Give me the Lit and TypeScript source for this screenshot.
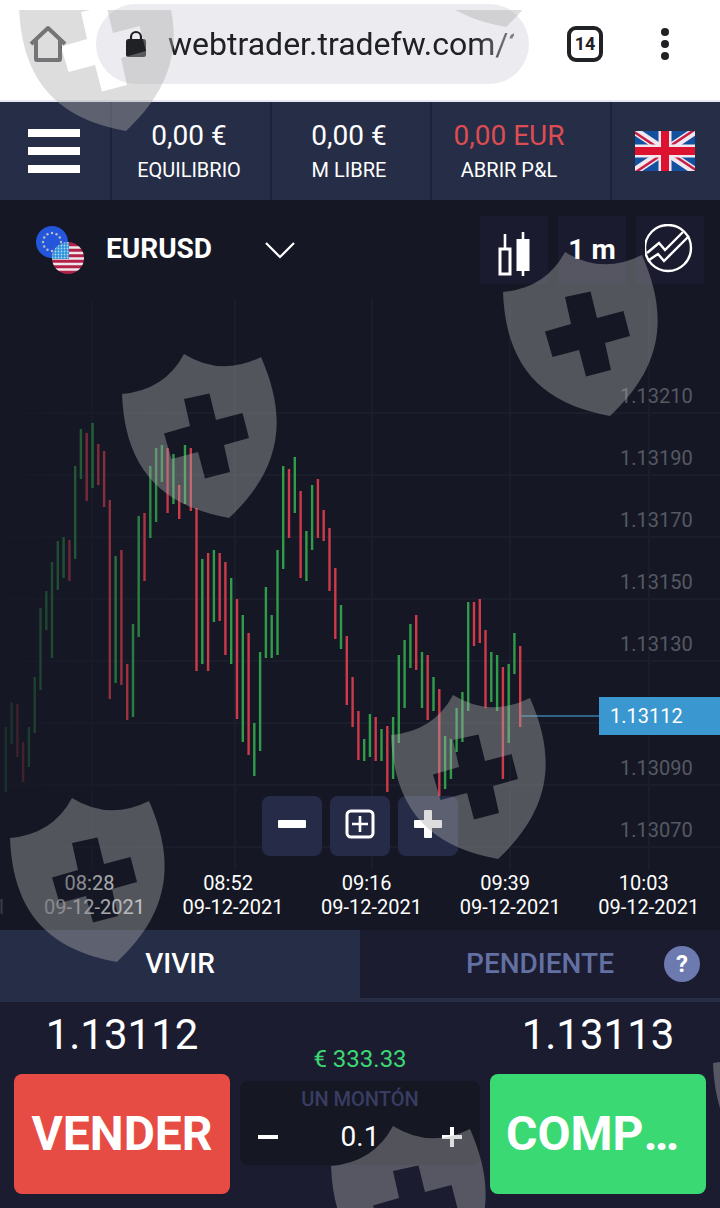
import { LitElement, html, css, svg } from "lit";
import { customElement, property, state } from "lit/decorators.js";

type Candle = [direction: "u" | "d", high: number, low: number];

const CANDLES: Candle[] = [
  ["u", 727, 792], ["u", 702, 744], ["d", 704, 757], ["d", 742, 782], ["u", 727, 767], ["u", 677, 733],
  ["u", 608, 690], ["u", 591, 630], ["u", 562, 658], ["u", 541, 590], ["u", 537, 578], ["d", 540, 581],
  ["u", 466, 559], ["u", 429, 479], ["d", 433, 501], ["u", 423, 488], ["d", 444, 485], ["d", 451, 507],
  ["d", 500, 699], ["u", 556, 683], ["d", 550, 685], ["d", 664, 720], ["u", 624, 717], ["u", 516, 637],
  ["d", 513, 581], ["u", 466, 538], ["u", 448, 522], ["u", 445, 482], ["d", 448, 513], ["u", 454, 504],
  ["d", 485, 519], ["u", 445, 504], ["d", 448, 511], ["d", 508, 671], ["u", 559, 664], ["d", 553, 671],
  ["u", 550, 622], ["d", 553, 621], ["d", 562, 655], ["u", 578, 664], ["d", 599, 719], ["u", 615, 742],
  ["d", 633, 755], ["u", 723, 776], ["u", 652, 751], ["u", 587, 658], ["u", 615, 658], ["u", 550, 655],
  ["u", 466, 569], ["d", 469, 538], ["u", 457, 513], ["d", 491, 578], ["u", 531, 581], ["u", 485, 550],
  ["d", 479, 538], ["d", 510, 541], ["d", 528, 591], ["d", 568, 639], ["u", 605, 649], ["d", 636, 705],
  ["d", 677, 727], ["d", 711, 760], ["u", 739, 761], ["u", 714, 757], ["d", 717, 761], ["u", 729, 761],
  ["d", 726, 792], ["u", 717, 779], ["u", 655, 743], ["u", 640, 708], ["u", 624, 668], ["d", 615, 670],
  ["u", 652, 708], ["d", 655, 720], ["u", 677, 711], ["d", 689, 797], ["u", 736, 789], ["u", 739, 779],
  ["u", 708, 752], ["u", 692, 742], ["u", 602, 711], ["d", 602, 646], ["d", 599, 643], ["d", 630, 708],
  ["u", 652, 702], ["u", 655, 711], ["d", 667, 779], ["u", 664, 743], ["u", 633, 674], ["d", 646, 727],
];

// The empty slot is the level hidden behind the current price tag.
const PRICES = ["1.13210", "1.13190", "1.13170", "1.13150", "1.13130", "", "1.13090", "1.13070"];
const TIMES = ["08:04", "08:28", "08:52", "09:16", "09:39", "10:03"];
const GRID_X = [92, 235, 372, 510, 649];
const GRID_Y = [413, 475, 537, 599, 661, 723, 785, 847];

@customElement("price-chart")
class PriceChart extends LitElement {
  static styles = css`
    :host {
      display: grid;
      position: relative;
      height: 630px;
      overflow: hidden;
      background: #151824;
      color: #fff;
      font-family: Roboto, "Noto Sans", sans-serif;
    }
    :host::after {
      content: "";
      position: absolute;
      inset: 0 auto 0 0;
      width: 180px;
      pointer-events: none;
      background: linear-gradient(90deg, rgba(21, 24, 36, 0.85), rgba(21, 24, 36, 0.5) 45%, rgba(21, 24, 36, 0));
    }
    .plot, .prices, .footer { grid-area: 1 / 1; }
    .plot { width: 100%; height: 630px; display: block; }
    .grid { stroke: #1a1d2a; stroke-width: 2; }
    .u { stroke: #309c4a; stroke-width: 2.4; }
    .d { stroke: #cf3a4a; stroke-width: 2.4; }
    .last { stroke: #2f6487; stroke-width: 2; }
    .prices {
      justify-self: end;
      width: 100px;
      padding-top: 65px;
      font-size: 20px;
      line-height: 62px;
      color: #565863;
    }
    .level { height: 62px; }
    .tag {
      position: absolute;
      right: 0;
      top: 397px;
      width: 110px;
      padding-left: 11px;
      background: #3a97cf;
      font-size: 20px;
      line-height: 38px;
    }
    .footer {
      align-self: end;
      min-width: 0;
      display: grid;
      gap: 15px;
      padding-bottom: 11px;
    }
    .zoom { display: flex; justify-content: center; gap: 8px; }
    .zoom button {
      width: 60px;
      height: 60px;
      padding: 0 0 4px;
      border: 0;
      border-radius: 8px;
      background: #262c48;
      color: #fff;
      display: grid;
      place-items: center;
    }
    .times {
      display: flex;
      justify-content: flex-end;
      overflow: hidden;
      padding-right: 2px;
      font-size: 20px;
      line-height: 24px;
      text-align: center;
    }
    .slot { flex: 0 0 19.3%; display: grid; }
    .hour { padding-right: 10px; }
  `;

  render() {
    return html`
      <svg class="plot" viewBox="0 300 720 630" preserveAspectRatio="none" role="img" aria-label="EURUSD">
        ${GRID_X.map((x) => svg`<line class="grid" x1=${x} x2=${x} y1="300" y2="870"></line>`)}
        ${GRID_Y.map((y) => svg`<line class="grid" x1="0" x2="720" y1=${y} y2=${y}></line>`)}
        ${CANDLES.map(([dir, high, low], i) => {
          const x = (5.8 + i * 5.78).toFixed(1);
          return svg`<line class=${dir} x1=${x} x2=${x} y1=${high} y2=${low}></line>`;
        })}
        <line class="last" x1="521" x2="600" y1="716" y2="716"></line>
      </svg>
      <div class="prices">${PRICES.map((p) => html`<div class="level">${p}</div>`)}</div>
      <div class="tag">1.13112</div>
      <div class="footer">
        <div class="zoom">
          <button aria-label="Alejar">
            <svg width="30" height="30" viewBox="0 0 30 30"><rect x="1" y="11" width="28" height="8" rx="1" fill="currentColor"/></svg>
          </button>
          <button aria-label="Restablecer">
            <svg width="30" height="30" viewBox="0 0 30 30" fill="none" stroke="currentColor" stroke-width="3">
              <rect x="2" y="2" width="26" height="26" rx="4"/><path d="M7 15H23M15 7V23" stroke-width="2.6"/>
            </svg>
          </button>
          <button aria-label="Acercar">
            <svg width="30" height="30" viewBox="0 0 30 30" fill="currentColor"><rect x="1" y="11" width="28" height="8" rx="1"/><rect x="11" y="1" width="8" height="28" rx="1"/></svg>
          </button>
        </div>
        <div class="times">
          ${TIMES.map((t) => html`<div class="slot"><span class="hour">${t}</span><span>09-12-2021</span></div>`)}
        </div>
      </div>
    `;
  }
}

@customElement("account-stat")
class AccountStat extends LitElement {
  @property() value = "";
  @property() label = "";
  @property({ type: Boolean, reflect: true }) loss = false;

  static styles = css`
    :host {
      display: grid;
      align-content: center;
      padding: 2px 4px 0 0;
      text-align: center;
      font-family: Roboto, "Noto Sans", sans-serif;
      color: #fff;
    }
    .value { font-size: 28px; line-height: 36px; }
    .label { font-size: 20px; line-height: 32px; }
    :host([loss]) .value { color: #dc4c52; }
  `;

  render() {
    return html`<div class="value">${this.value}</div><div class="label">${this.label}</div>`;
  }
}

const SHIELDS = [[19, -33], [399, -137], [122, 354], [503, 252], [391, 695], [10, 798], [331, 1126], [713, 1023]];

@customElement("app-root")
class AppRoot extends LitElement {
  @state() private lots = "0.1";

  static styles = css`
    :host {
      display: flex;
      flex-direction: column;
      position: relative;
      min-height: 100vh;
      overflow: hidden;
      background: #1b1c30;
      color: #fff;
      font-family: Roboto, "Noto Sans", sans-serif;
    }
    * { box-sizing: border-box; }
    button { font-family: inherit; color: inherit; margin: 0; }
    .browser {
      display: flex;
      align-items: center;
      height: 102px;
      padding: 0 36px 12px 28px;
      border-bottom: 2px solid #e6e7f0;
      background: #fff;
      color: #202124;
    }
    .bare { border: 0; background: none; padding: 0; display: grid; place-items: center; }
    .address {
      flex: 1;
      min-width: 0;
      display: flex;
      align-items: center;
      gap: 20px;
      height: 80px;
      margin: 0 38px 0 28px;
      padding: 0 15px 0 28px;
      border-radius: 40px;
      background: #ebebf0;
    }
    .address svg { flex: none; }
    .url {
      flex: 1;
      min-width: 0;
      padding: 0;
      border: 0;
      background: none;
      color: #202124;
      font: 32px/40px Roboto, "Noto Sans", sans-serif;
      -webkit-mask-image: linear-gradient(90deg, #000 88%, rgba(0, 0, 0, 0.5));
      mask-image: linear-gradient(90deg, #000 88%, rgba(0, 0, 0, 0.5));
    }
    .tabcount {
      width: 36px;
      height: 36px;
      margin-right: 43px;
      border: 4px solid #202124;
      border-radius: 9px;
      font-size: 18px;
      font-weight: 700;
      line-height: 28px;
    }
    .account {
      display: grid;
      grid-template-columns: 110fr 160fr 160fr 180fr 110fr;
      height: 98px;
      background: #262d46;
    }
    .account > * + * { border-left: 2px solid #1e233a; }
    .account > .bare { padding-right: 2px; }
    .account > .pnl { padding-right: 24px; }
    .toolbar {
      display: flex;
      align-items: center;
      gap: 10px;
      height: 100px;
      padding: 0 16px 0 36px;
      background: #151824;
    }
    .symbol {
      display: flex;
      align-items: center;
      margin-right: auto;
      padding: 0;
      border: 0;
      background: none;
      font-size: 28px;
      font-weight: 700;
      line-height: 48px;
    }
    .name { padding-bottom: 2px; }
    .pair { margin-right: 22px; }
    .chevron { margin-left: 52px; }
    .tool {
      display: grid;
      place-items: center;
      width: 68px;
      height: 68px;
      padding: 0 0 2px;
      border: 0;
      background: #1a1b2e;
      font-size: 28px;
      font-weight: 700;
    }
    .tabs { display: grid; grid-template-columns: 1fr 1fr; position: relative; height: 72px; }
    .tab {
      padding: 0;
      border: 0;
      border-bottom: 4px solid #292c45;
      background: #1b1c30;
      color: #6370a3;
      font-size: 28px;
      font-weight: 500;
      line-height: 32px;
    }
    .tab.active { background: #262d46; border-color: #262d46; color: #fff; }
    .help {
      position: absolute;
      right: 20px;
      top: 16px;
      width: 36px;
      height: 36px;
      padding: 0;
      border: 0;
      border-radius: 50%;
      background: #6d7aaf;
      font-size: 24px;
      font-weight: 700;
    }
    .ticket {
      flex: 1;
      display: grid;
      grid-template-columns: 216fr 240fr 216fr;
      align-items: start;
      gap: 10px;
      padding: 8px 14px 14px;
    }
    .side { display: grid; grid-template-columns: minmax(0, 1fr); gap: 14px; }
    .quote { font-size: 42px; line-height: 50px; text-align: center; }
    .trade {
      height: 120px;
      padding: 0 16px 2px;
      border: 0;
      border-radius: 8px;
      font-size: 48px;
      font-weight: 700;
      overflow: hidden;
      text-overflow: ellipsis;
      white-space: nowrap;
    }
    .sell { background: #e64c44; }
    .buy { background: #3bd974; text-align: left; }
    .sizing { display: grid; gap: 6px; padding-top: 33px; text-align: center; }
    .margin { color: #3bd974; font-size: 24px; line-height: 32px; }
    .lots {
      display: grid;
      grid-template-columns: 56px 1fr 56px;
      align-content: start;
      height: 84px;
      padding-top: 2px;
      border-radius: 8px;
      background: #151722;
    }
    .caption {
      grid-column: 1 / -1;
      color: #393d63;
      font-size: 20px;
      font-weight: 500;
      line-height: 32px;
    }
    .amount {
      min-width: 0;
      padding: 0;
      border: 0;
      background: none;
      color: #fff;
      font: 28px/32px Roboto, "Noto Sans", sans-serif;
      text-align: center;
    }
    .step { height: 44px; }
    .shields {
      position: absolute;
      left: 0;
      top: 10px;
      pointer-events: none;
      fill: rgba(172, 172, 172, 0.41);
    }
  `;

  private step(delta: number) {
    this.lots = Math.max(0.1, Number(this.lots) + delta).toFixed(1);
  }

  private stars() {
    return Array.from({ length: 12 }, (_, i) => {
      const a = (i * Math.PI) / 6;
      return svg`<circle cx=${(16 + 9 * Math.sin(a)).toFixed(1)} cy=${(16 - 9 * Math.cos(a)).toFixed(1)} r="1.2"></circle>`;
    });
  }

  private pairIcon() {
    return html`<svg class="pair" width="48" height="48" viewBox="0 0 48 48">
      <defs>
        <clipPath id="coin"><circle cx="32" cy="32" r="16"/></clipPath>
        <pattern id="dots" width="3" height="3" patternUnits="userSpaceOnUse"><rect width="3" height="3" fill="#2f8edb"/><circle cx="1.5" cy="1.5" r="0.9" fill="#a9dcf7"/></pattern>
      </defs>
      <circle cx="16" cy="16" r="16" fill="#2456dc"/>
      <g fill="#b9bfc4">${this.stars()}</g>
      <g clip-path="url(#coin)">
        <rect x="16" y="16" width="32" height="32" fill="#b22248"/>
        <path d="M16 21.5h32M16 27h32M16 32.5h32M16 38h32M16 43.5h32" stroke="#eee6ea" stroke-width="2.7"/>
        <rect x="16" y="16" width="17" height="17" fill="url(#dots)"/>
      </g>
    </svg>`;
  }

  private flag() {
    return html`<svg width="60" height="40" viewBox="0 0 60 40">
      <clipPath id="uk"><path d="M30 20H60V40zV40H0zH0V0zV0H60z"/></clipPath>
      <rect width="60" height="40" fill="#1450a0"/>
      <path d="M0 0L60 40M60 0L0 40" stroke="#f1e8ef" stroke-width="8"/>
      <path d="M0 0L60 40M60 0L0 40" clip-path="url(#uk)" stroke="#c71f43" stroke-width="5"/>
      <path d="M30 0V40M0 20H60" stroke="#f1e8ef" stroke-width="13"/>
      <path d="M30 0V40M0 20H60" stroke="#dc1230" stroke-width="8"/>
    </svg>`;
  }

  private shields() {
    return html`<svg class="shields" width="720" height="1198" viewBox="0 10 720 1198" aria-hidden="true">
      ${SHIELDS.map(([x, y]) => svg`<path transform=${`translate(${x} ${y})`} fill-rule="evenodd"
        d="M0 40Q43 36 62 0Q99 23 139 3C164 60 163 112 107 164C42 152 3 118 0 40ZM62 45L87.5 39.5L94 66L120.5 59L127 84L102 91L108 118L83 124.5L76 98L49.5 105L42 79.5L68 72Z"></path>`)}
    </svg>`;
  }

  render() {
    return html`
      <header class="browser">
        <button class="bare" aria-label="Inicio">
          <svg width="40" height="40" viewBox="0 0 40 40" fill="none" stroke="#4c4d50" stroke-width="4" stroke-linejoin="round">
            <path d="M3 20L20 4L37 20M8 16V35Q8 36 9 36H31Q32 36 32 35V16"/>
          </svg>
        </button>
        <label class="address">
          <svg width="24" height="28" viewBox="0 0 24 28" fill="#202124">
            <path d="M7 11V7a5 5 0 0 1 10 0V11" fill="none" stroke="#202124" stroke-width="2.2"/>
            <rect x="2" y="9" width="20" height="18" rx="2.5"/>
          </svg>
          <input class="url" aria-label="Dirección" .value=${"webtrader.tradefw.com/?"} />
        </label>
        <button class="bare tabcount">14</button>
        <button class="bare" aria-label="Menú">
          <svg width="38" height="36" viewBox="0 0 38 36" fill="#202124"><circle cx="19" cy="6" r="4"/><circle cx="19" cy="18" r="4"/><circle cx="19" cy="30" r="4"/></svg>
        </button>
      </header>

      <section class="account">
        <button class="bare" aria-label="Abrir menú">
          <svg width="52" height="44" viewBox="0 0 52 44" fill="#fff"><path d="M0 0H52V8H0zM0 18H52V26H0zM0 36H52V44H0z"/></svg>
        </button>
        <account-stat value="0,00 €" label="EQUILIBRIO"></account-stat>
        <account-stat value="0,00 €" label="M LIBRE"></account-stat>
        <account-stat class="pnl" loss value="0,00 EUR" label="ABRIR P&L"></account-stat>
        <button class="bare" aria-label="Idioma">${this.flag()}</button>
      </section>

      <nav class="toolbar">
        <button class="symbol">
          ${this.pairIcon()}<span class="name">EURUSD</span>
          <svg class="chevron" width="32" height="20" viewBox="0 0 32 20" fill="none" stroke="#fff" stroke-width="2.2"><path d="M2 3L16 17L30 3"/></svg>
        </button>
        <button class="tool" aria-label="Tipo de gráfico">
          <svg width="36" height="54" viewBox="0 0 36 54">
            <path d="M9 12V27M27 10V54" stroke="#fff" stroke-width="2.6"/>
            <rect x="4" y="27" width="10" height="25" fill="none" stroke="#fff" stroke-width="3"/>
            <rect x="20.5" y="17" width="13" height="32" fill="#fff"/>
          </svg>
        </button>
        <button class="tool">1 m</button>
        <button class="tool" aria-label="Indicadores">
          <svg width="50" height="50" viewBox="2 1 50 50" fill="none" stroke="#fff" stroke-width="2.4">
            <circle cx="25" cy="25" r="23"/>
            <path d="M4 30L16 20L22 27L40 9M6 37L15 31L21 38L46 13"/>
          </svg>
        </button>
      </nav>

      <price-chart></price-chart>

      <div class="tabs">
        <button class="tab active">VIVIR</button>
        <button class="tab">PENDIENTE</button>
        <button class="help">?</button>
      </div>

      <section class="ticket">
        <div class="side">
          <div class="quote">1.13112</div>
          <button class="trade sell">VENDER</button>
        </div>
        <div class="sizing">
          <div class="margin">€ 333.33</div>
          <div class="lots">
            <label class="caption" for="lots">UN MONTÓN</label>
            <button class="bare step" aria-label="Menos" @click=${() => this.step(-0.1)}>
              <svg width="20" height="20" viewBox="0 0 20 20"><path d="M0 10H20" stroke="#fff" stroke-width="4"/></svg>
            </button>
            <input class="amount" id="lots" .value=${this.lots} />
            <button class="bare step" aria-label="Más" @click=${() => this.step(0.1)}>
              <svg width="20" height="20" viewBox="0 0 20 20"><path d="M0 10H20M10 0V20" stroke="#fff" stroke-width="4"/></svg>
            </button>
          </div>
        </div>
        <div class="side">
          <div class="quote">1.13113</div>
          <button class="trade buy">COMPRAR</button>
        </div>
      </section>
      ${this.shields()}
    `;
  }
}
